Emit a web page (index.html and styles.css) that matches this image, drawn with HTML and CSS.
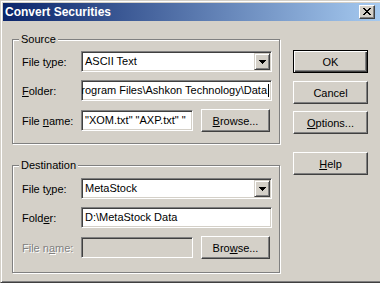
FILE: index.html
```html
<!DOCTYPE html>
<html lang="en">
<head>
    <meta charset="UTF-8">
    <title>Convert Securities</title>
    <link rel="stylesheet" href="styles.css">
</head>
<body>
    <div class="window">
        <div class="titlebar">
            <span class="title">Convert Securities</span>
            <span class="close-btn">
                <svg width="8" height="7" viewBox="0 0 8 7"><path d="M0 0h2v1h1v1h2v-1h1v-1h2v1h-1v1h-1v1h-1v1h1v1h1v1h1v1h-2v-1h-1v-1h-2v1h-1v1h-2v-1h1v-1h1v-1h1v-1h-1v-1h-1v-1h-1z" fill="#000"/></svg>
            </span>
        </div>
        <div class="client">
            <div class="groups">
                <div class="group source">
                    <span class="legend">Source</span>
                    <div class="row">
                        <span class="label">File t<u>y</u>pe:</span>
                        <div class="combo">
                            <span class="field-text">ASCII Text</span>
                            <span class="drop-btn"><svg width="7" height="4" viewBox="0 0 7 4"><path d="M0 0h7v1h-1v1h-1v1h-1v1h-1v-1h-1v-1h-1v-1h-1z" fill="#000"/></svg></span>
                        </div>
                    </div>
                    <div class="row">
                        <span class="label"><u>F</u>older:</span>
                        <div class="edit scrolled">
                            <span class="field-text">rogram Files\Ashkon Technology\Data</span><span class="caret"></span>
                        </div>
                    </div>
                    <div class="row tall">
                        <span class="label">File <u>n</u>ame:</span>
                        <div class="edit short">
                            <span class="field-text">"XOM.txt" "AXP.txt" "</span>
                        </div>
                        <span class="btn browse"><u>B</u>rowse...</span>
                    </div>
                </div>
                <div class="group dest">
                    <span class="legend">Destination</span>
                    <div class="row">
                        <span class="label">File t<u>y</u>pe:</span>
                        <div class="combo">
                            <span class="field-text">MetaStock</span>
                            <span class="drop-btn"><svg width="7" height="4" viewBox="0 0 7 4"><path d="M0 0h7v1h-1v1h-1v1h-1v1h-1v-1h-1v-1h-1v-1h-1z" fill="#000"/></svg></span>
                        </div>
                    </div>
                    <div class="row">
                        <span class="label">Fold<u>e</u>r:</span>
                        <div class="edit">
                            <span class="field-text">D:\MetaStock Data</span>
                        </div>
                    </div>
                    <div class="row tall">
                        <span class="label disabled">File n<u>a</u>me:</span>
                        <div class="edit short disabled-edit"></div>
                        <span class="btn browse">Bro<u>w</u>se...</span>
                    </div>
                </div>
            </div>
            <div class="buttons">
                <span class="btn default">OK</span>
                <span class="btn cancel">Cancel</span>
                <span class="btn options"><u>O</u>ptions...</span>
                <span class="btn help"><u>H</u>elp</span>
            </div>
        </div>
    </div>
</body>
</html>
```

FILE: styles.css
```css
body {
    margin: 0;
    background-color: #d4d0c8;
    font-family: "Liberation Sans", Arial, sans-serif;
    font-size: 11px;
    color: #000;
    overflow: hidden;
}
.window {
    width: 383px;
    height: 283px;
    box-sizing: border-box;
    border: 1px solid;
    border-color: #d4d0c8 #404040 #404040 #d4d0c8;
    box-shadow: inset 1px 1px #fff, inset -1px -1px #808080;
    padding: 2px;
    background-color: #d4d0c8;
}
.titlebar {
    height: 18px;
    display: flex;
    align-items: center;
    justify-content: space-between;
    padding: 0 5px 0 2px;
    background: linear-gradient(to right, #0a246a, #a6caf0);
}
.title {
    color: #fff;
    font-weight: bold;
    font-size: 12px;
}
.close-btn {
    width: 16px;
    height: 14px;
    box-sizing: border-box;
    display: flex;
    align-items: center;
    justify-content: center;
    background-color: #d4d0c8;
    border: 1px solid;
    border-color: #fff #404040 #404040 #fff;
    box-shadow: inset -1px -1px #808080;
}
.close-btn svg {
    display: block;
    margin: 0 1px 1px 0;
}
.client {
    display: flex;
    padding: 18px 0 0 9px;
}
.groups {
    width: 268px;
    display: flex;
    flex-direction: column;
    gap: 21px;
}
.group {
    position: relative;
    border: 1px solid #808080;
    box-shadow: inset 1px 1px #fff, 1px 1px #fff;
    padding: 11px 0 11px 9px;
    display: flex;
    flex-direction: column;
    gap: 8px;
}
.group.dest {
    padding-top: 12px;
    padding-bottom: 13px;
}
.legend {
    position: absolute;
    top: -7px;
    left: 6px;
    padding: 0 2px;
    line-height: 13px;
    background-color: #d4d0c8;
}
.row {
    display: flex;
    align-items: center;
    height: 21px;
}
.row.tall {
    height: 23px;
}
.label {
    width: 59px;
    flex-shrink: 0;
    white-space: nowrap;
}
.label.disabled {
    color: #808080;
    text-shadow: 1px 1px 0 #fff;
}
.combo,
.edit {
    width: 191px;
    height: 21px;
    box-sizing: border-box;
    border: 1px solid;
    border-color: #808080 #fff #fff #808080;
    box-shadow: inset 1px 1px #404040, inset -1px -1px #d4d0c8;
    background-color: #fff;
    display: flex;
    align-items: center;
    padding: 2px 2px 2px 3px;
    overflow: hidden;
    white-space: nowrap;
}
.edit.short {
    width: 112px;
}
.edit.scrolled {
    justify-content: flex-end;
}
.edit.disabled-edit {
    background-color: #d4d0c8;
}
.combo {
    justify-content: space-between;
}
.field-text {
    line-height: 13px;
}
.caret {
    width: 1px;
    height: 13px;
    margin-left: 1px;
    background-color: #000;
    flex-shrink: 0;
}
.drop-btn {
    width: 16px;
    height: 17px;
    box-sizing: border-box;
    margin-right: -1px;
    display: flex;
    align-items: center;
    justify-content: center;
    background-color: #d4d0c8;
    border: 1px solid;
    border-color: #d4d0c8 #404040 #404040 #d4d0c8;
    box-shadow: inset 1px 1px #fff, inset -1px -1px #808080;
}
.drop-btn svg {
    display: block;
}
.btn {
    width: 75px;
    height: 23px;
    box-sizing: border-box;
    display: flex;
    align-items: center;
    justify-content: center;
    border: 1px solid;
    border-color: #fff #404040 #404040 #fff;
    box-shadow: inset -1px -1px #808080;
    background-color: #d4d0c8;
}
.btn.browse {
    width: 69px;
    margin-left: 8px;
}
.btn.default {
    border-color: #000;
    box-shadow: inset 1px 1px #fff, inset -1px -1px #404040, inset -2px -2px #808080;
}
.buttons {
    margin: 11px 0 0 13px;
    display: flex;
    flex-direction: column;
}
.btn.cancel {
    margin-top: 8px;
}
.btn.options {
    margin-top: 7px;
}
.btn.help {
    margin-top: 18px;
}
```
